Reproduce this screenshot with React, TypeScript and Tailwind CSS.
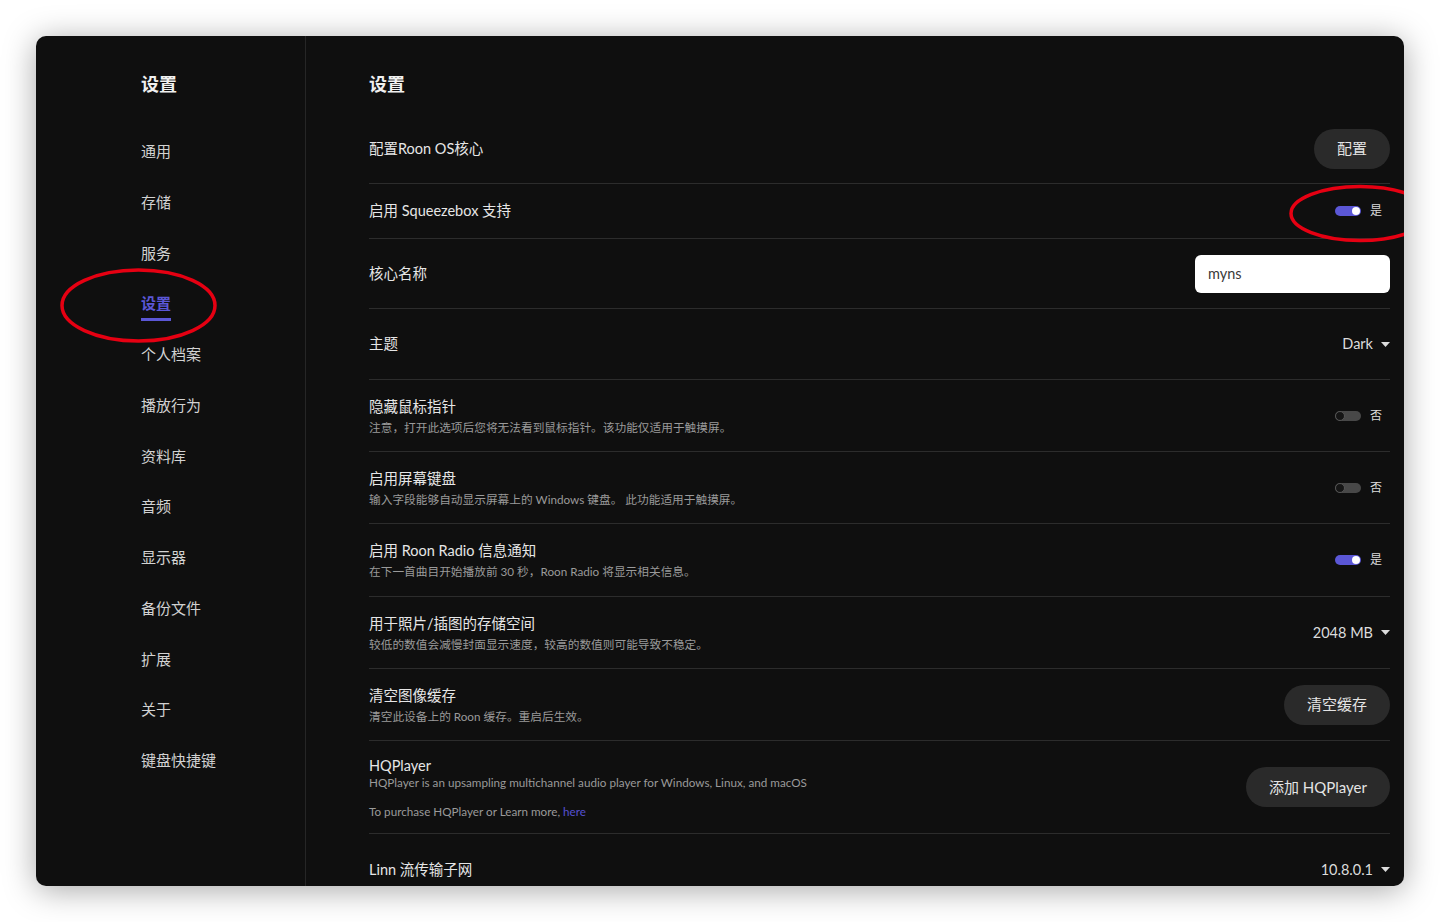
import React from 'react';

const navItems = ['通用', '存储', '服务', '设置', '个人档案', '播放行为', '资料库', '音频', '显示器', '备份文件', '扩展', '关于', '键盘快捷键'];

function Toggle({ on }: { on: boolean }) {
  return (
    <div className="flex items-center gap-[9px] pr-[8px]">
      {on ? (
        <div className="w-[26px] h-[10px] rounded-full bg-[#5b57d6] flex items-center justify-end pr-[1px]">
          <div className="w-[8px] h-[8px] rounded-full bg-white" />
        </div>
      ) : (
        <div className="w-[26px] h-[10px] rounded-full bg-[#484848] flex items-center">
          <div className="w-[10px] h-[10px] rounded-full bg-[#151515] border border-[#555]" />
        </div>
      )}
      <span className="text-[12px] text-[#dcdcdc]">{on ? '是' : '否'}</span>
    </div>
  );
}

function Dropdown({ value }: { value: string }) {
  return (
    <div className="flex items-center gap-[8px] text-[14.5px] text-[#dcdcdc]">
      <span>{value}</span>
      <svg width="9" height="5" viewBox="0 0 9 5">
        <path d="M0 0 L9 0 L4.5 5 Z" fill="#dcdcdc" />
      </svg>
    </div>
  );
}

function PillButton({ children }: { children: React.ReactNode }) {
  return (
    <button className="h-[40px] px-[23px] rounded-full bg-[#2a2a2a] text-[15px] text-[#e4e4e4]">
      {children}
    </button>
  );
}

function Row({ h, title, sub, right }: { h: string; title: string; sub?: string; right: React.ReactNode }) {
  return (
    <div className={`${h} shrink-0 flex items-center justify-between border-b border-[#2c2c2c]`}>
      <div className="flex flex-col">
        <span className="text-[14.5px] leading-[22px] text-[#e6e6e6]">{title}</span>
        {sub && <span className="text-[11.7px] leading-[18px] text-[#9a9a9a]">{sub}</span>}
      </div>
      {right}
    </div>
  );
}

export default function App() {
  return (
    <div className="min-h-[922px] bg-white p-[36px]" style={{ fontFamily: "Lato, 'Noto Sans CJK SC', sans-serif" }}>
      <div className="relative h-[850px] rounded-[10px] bg-[#0f0f0f] overflow-hidden flex shadow-[0_4px_32px_rgba(0,0,0,0.35)]">
        {/* sidebar */}
        <div className="w-[270px] shrink-0 border-r border-[#262626] pl-[105px] pt-[35px]">
          <div className="text-[18px] leading-[26px] font-bold text-[#f0f0f0]">设置</div>
          <div className="mt-[29px] flex flex-col">
            {navItems.map((item) => (
              <div key={item} className="h-[50.75px] flex items-center">
                {item === '设置' ? (
                  <span className="relative text-[15px] text-[#5b57d6] font-bold">
                    {item}
                    <span className="absolute left-0 right-0 top-[26px] h-[3px] bg-[#5b57d6]" />
                  </span>
                ) : (
                  <span className="text-[15px] text-[#d2d2d2]">{item}</span>
                )}
              </div>
            ))}
          </div>
        </div>

        {/* main */}
        <div className="flex-1 pl-[63px] pr-[14px] pt-[35px]">
          <div className="text-[18px] leading-[26px] font-bold text-[#f0f0f0]">设置</div>
          <div className="mt-[17px] flex flex-col">
            <Row h="h-[70px]" title="配置Roon OS核心" right={<PillButton>配置</PillButton>} />
            <Row h="h-[55px]" title="启用 Squeezebox 支持" right={<Toggle on />} />
            <Row
              h="h-[70px]"
              title="核心名称"
              right={
                <div className="w-[195px] h-[38px] rounded-[6px] bg-white flex items-center px-[13px] text-[14.5px] text-[#3a3a3a]">
                  myns
                </div>
              }
            />
            <Row h="h-[71px]" title="主题" right={<Dropdown value="Dark" />} />
            <Row
              h="h-[72px]"
              title="隐藏鼠标指针"
              sub="注意，打开此选项后您将无法看到鼠标指针。该功能仅适用于触摸屏。"
              right={<Toggle on={false} />}
            />
            <Row
              h="h-[72px]"
              title="启用屏幕键盘"
              sub="输入字段能够自动显示屏幕上的 Windows 键盘。 此功能适用于触摸屏。"
              right={<Toggle on={false} />}
            />
            <Row
              h="h-[73px]"
              title="启用 Roon Radio 信息通知"
              sub="在下一首曲目开始播放前 30 秒，Roon Radio 将显示相关信息。"
              right={<Toggle on />}
            />
            <Row
              h="h-[72px]"
              title="用于照片/插图的存储空间"
              sub="较低的数值会减慢封面显示速度，较高的数值则可能导致不稳定。"
              right={<Dropdown value="2048 MB" />}
            />
            <Row
              h="h-[72px]"
              title="清空图像缓存"
              sub="清空此设备上的 Roon 缓存。重启后生效。"
              right={<PillButton>清空缓存</PillButton>}
            />
            <div className="h-[93px] shrink-0 flex items-center justify-between border-b border-[#2c2c2c]">
              <div className="flex flex-col">
                <span className="text-[14.5px] leading-[20px] text-[#e6e6e6]">HQPlayer</span>
                <span className="text-[11.7px] leading-[12px] text-[#9a9a9a]">
                  HQPlayer is an upsampling multichannel audio player for Windows, Linux, and macOS
                </span>
                <span className="mt-[15px] text-[11.7px] leading-[16px] text-[#9a9a9a]">
                  To purchase HQPlayer or Learn more, <span className="text-[#5550d0]">here</span>
                </span>
              </div>
              <PillButton>添加 HQPlayer</PillButton>
            </div>
            <Row h="h-[72px]" title="Linn 流传输子网" right={<Dropdown value="10.8.0.1" />} />
          </div>
        </div>

        {/* annotation marks */}
        <svg className="absolute inset-0 pointer-events-none" width="1368" height="850">
          <ellipse cx="102.5" cy="269.5" rx="76.5" ry="35.5" fill="none" stroke="#e60012" strokeWidth="3.5" />
          <ellipse cx="1324" cy="177.5" rx="69" ry="27" fill="none" stroke="#e60012" strokeWidth="3.5" />
        </svg>
      </div>
    </div>
  );
}
